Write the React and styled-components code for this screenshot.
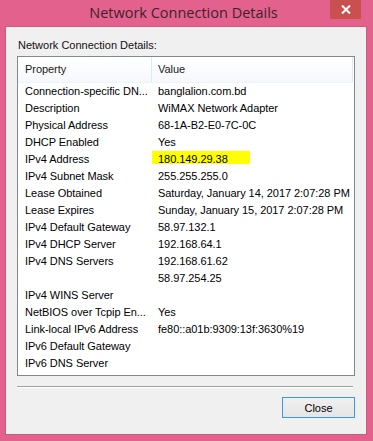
import React from 'react'
import styled, { createGlobalStyle } from 'styled-components'

const Global = createGlobalStyle`
  html, body {
    margin: 0;
    padding: 0;
    background: #e2628d;
  }
  body {
    font-family: "Liberation Sans", Arial, sans-serif;
  }
`

const Frame = styled.div`
  width: 373px;
  height: 441px;
  box-sizing: border-box;
  background: #e2628d;
  display: flex;
  flex-direction: column;
  padding: 0 7px 7px 6px;
`

const TitleBar = styled.div`
  height: 27px;
  display: grid;
  grid-template-columns: 1fr auto 1fr;
  align-items: start;
  margin: 0 -1px 0 -6px;
`

const Title = styled.div`
  grid-column: 2;
  font-family: "Open Sans", "Liberation Sans", sans-serif;
  font-size: 14.5px;
  line-height: 26px;
  color: #3f1f2c;
  white-space: nowrap;
`

const CloseX = styled.div`
  grid-column: 3;
  justify-self: end;
  margin-right: 6px;
  width: 31px;
  height: 19px;
  background: #c9504f;
  display: flex;
  align-items: center;
  justify-content: center;
`

const Client = styled.div`
  flex: 1;
  background: #f0f0f0;
  box-shadow: 0 0 0 1px #cf5a80;
  padding: 11px 11px 0 11px;
  display: flex;
  flex-direction: column;
  font-size: 11px;
  color: #000;
`

const Caption = styled.div`
  padding-left: 1px;
  height: 18px;
  line-height: 14px;
  color: #111;
`

const ListView = styled.div`
  height: 320px;
  box-sizing: border-box;
  border: 1px solid #828790;
  background: #fff;
  display: flex;
  flex-direction: column;
  letter-spacing: -0.05px;
`

const Header = styled.div`
  display: grid;
  grid-template-columns: 134px 1fr;
  height: 25px;
  background: linear-gradient(#ffffff, #f5f8fc);
  border-bottom: 1px solid #f0f2f6;
  margin-right: 1px;
`

const HeadCell = styled.div`
  padding-left: ${p => p.$pad}px;
  line-height: 25px;
  border-right: 1px solid #e3e8ef;
  color: #1a1a1a;
`

const Row = styled.div`
  display: grid;
  grid-template-columns: 134px 1fr;
  height: 17px;
  line-height: 17px;
`

const Cell = styled.div`
  padding-left: ${p => p.$pad}px;
  white-space: nowrap;
  overflow: hidden;
`

const Marked = styled.span`
  position: relative;
  display: inline-block;
  z-index: 0;

  &::before {
    content: '';
    position: absolute;
    z-index: -1;
    left: -9px;
    top: -2px;
    width: 101px;
    height: 15px;
    background: #ffff00;
  }
`

const Separator = styled.div`
  margin: 10px 2px 0 0;
  height: 1px;
  background: #a0a0a0;
  border-bottom: 1px solid #fff;
`

const Footer = styled.div`
  display: flex;
  justify-content: flex-end;
  padding-top: 9px;
`

const Button = styled.button`
  width: 73px;
  height: 21px;
  box-sizing: border-box;
  border: 1px solid #3c97f0;
  background: linear-gradient(#f0f0f0, #e5e5e5);
  font-family: "Liberation Sans", Arial, sans-serif;
  font-size: 11px;
  color: #000;
  padding: 0;
`

const rows = [
  ['Connection-specific DN...', 'banglalion.com.bd'],
  ['Description', 'WiMAX Network Adapter'],
  ['Physical Address', '68-1A-B2-E0-7C-0C'],
  ['DHCP Enabled', 'Yes'],
  ['IPv4 Address', '180.149.29.38', true],
  ['IPv4 Subnet Mask', '255.255.255.0'],
  ['Lease Obtained', 'Saturday, January 14, 2017 2:07:28 PM'],
  ['Lease Expires', 'Sunday, January 15, 2017 2:07:28 PM'],
  ['IPv4 Default Gateway', '58.97.132.1'],
  ['IPv4 DHCP Server', '192.168.64.1'],
  ['IPv4 DNS Servers', '192.168.61.62'],
  ['', '58.97.254.25'],
  ['IPv4 WINS Server', ''],
  ['NetBIOS over Tcpip En...', 'Yes'],
  ['Link-local IPv6 Address', 'fe80::a01b:9309:13f:3630%19'],
  ['IPv6 Default Gateway', ''],
  ['IPv6 DNS Server', ''],
]

export default function App() {
  return (
    <>
      <Global />
      <Frame>
        <TitleBar>
          <Title>Network Connection Details</Title>
          <CloseX>
            <svg width="10" height="9" viewBox="0 0 10 9">
              <path d="M1 0.5 L9 8.5 M9 0.5 L1 8.5" stroke="#fff" strokeWidth="2" />
            </svg>
          </CloseX>
        </TitleBar>
        <Client>
          <Caption>Network Connection Details:</Caption>
          <ListView>
            <Header>
              <HeadCell $pad={7}>Property</HeadCell>
              <HeadCell $pad={6}>Value</HeadCell>
            </Header>
            {rows.map(([k, v, hl], i) => (
              <Row key={i}>
                <Cell $pad={7}>{k}</Cell>
                <Cell $pad={6}>{hl ? <Marked>{v}</Marked> : v}</Cell>
              </Row>
            ))}
          </ListView>
          <Separator />
          <Footer>
            <Button>Close</Button>
          </Footer>
        </Client>
      </Frame>
    </>
  )
}
